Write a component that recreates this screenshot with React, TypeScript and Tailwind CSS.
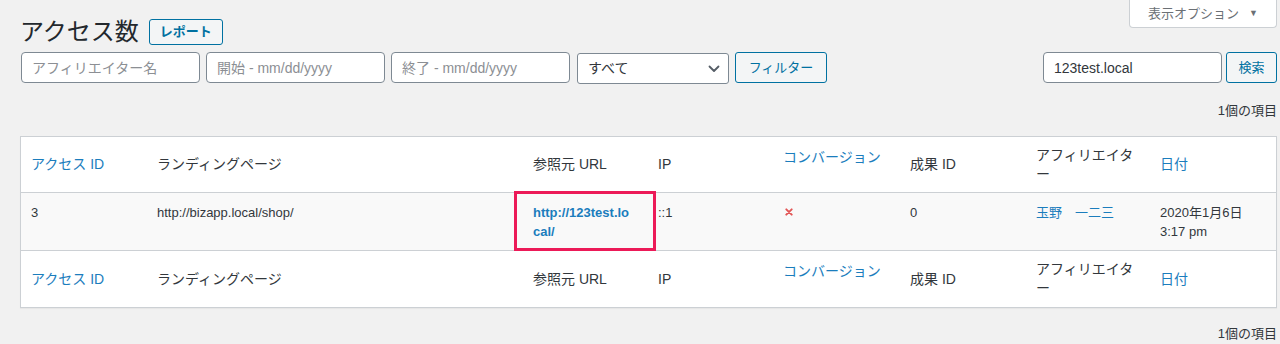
import React from "react";

const FONT = { fontFamily: '"Liberation Sans", "Noto Sans CJK JP", sans-serif' };

function Chevron() {
  return (
    <svg width="12" height="8" viewBox="0 0 12 8" className="text-[#555d66]">
      <path d="M1.5 1.5 L6 6 L10.5 1.5" fill="none" stroke="currentColor" strokeWidth="1.8" strokeLinecap="round" strokeLinejoin="round" />
    </svg>
  );
}

function RedX() {
  return (
    <svg width="8" height="8" viewBox="0 0 8 8">
      <path d="M1.3 1.3 L6.7 6.7 M6.7 1.3 L1.3 6.7" stroke="#e25555" strokeWidth="1.9" strokeLinecap="round" />
    </svg>
  );
}

const cols = ["w-[126px]", "w-[376px]", "w-[125px]", "w-[125px]", "w-[127px]", "w-[126px]", "w-[124px]", "w-[126px]"];

function HeadRow({ border }: { border: "b" | "none" }) {
  return (
    <div className={`flex h-[56px] text-[14px] text-[#32373c] ${border === "b" ? "border-b border-[#ccd0d4]" : ""}`}>
      <div className={`${cols[0]} flex items-center pl-[10px] text-[#1b7dbd]`}>アクセス ID</div>
      <div className={`${cols[1]} flex items-center pl-[10px]`}>ランディングページ</div>
      <div className={`${cols[2]} flex items-center pl-[10px]`}>参照元 URL</div>
      <div className={`${cols[3]} flex items-center pl-[10px]`}>IP</div>
      <div className={`${cols[4]} flex items-start pl-[10px] pt-[10px] text-[#1b7dbd]`}>コンバージョン</div>
      <div className={`${cols[5]} flex items-center pl-[10px]`}>成果 ID</div>
      <div className={`${cols[6]} flex items-center pl-[10px] leading-[19px]`}>
        <span>
          アフィリエイタ
          <br />ー
        </span>
      </div>
      <div className={`${cols[7]} flex items-center pl-[10px] text-[#1b7dbd]`}>日付</div>
    </div>
  );
}

export default function App() {
  return (
    <div className="min-h-[344px] w-full bg-[#f1f1f1] pl-[20px] pr-[3px]" style={FONT}>
      <div className="flex h-[52px] items-start justify-between">
        <div className="mt-[19px] flex items-center gap-[10px]">
          <h1 className="text-[24px] leading-[26px] text-[#23282d]">アクセス数</h1>
          <button className="h-[26px] rounded-[3px] border border-[#0071a1] bg-[#f3f5f6] px-[10px] text-[13px] font-semibold text-[#0071a1]">
            レポート
          </button>
        </div>
        <div className="flex h-[28px] w-[148px] items-center justify-center gap-[10px] rounded-b-[4px] border border-t-0 border-[#ccd0d4] bg-white text-[13px] text-[#6b7075]">
          <span>表示オプション</span>
          <span className="text-[9px]">▼</span>
        </div>
      </div>

      <div className="flex h-[31px] items-center justify-between">
        <div className="ml-px flex h-full items-center">
          <input
            className="h-[31px] w-[179px] rounded-[4px] border border-[#7e8993] bg-white px-[10px] text-[14px] text-[#32373c] placeholder:text-[#8c8f94] outline-none"
            placeholder="アフィリエイター名"
          />
          <input
            className="ml-[6px] h-[31px] w-[179px] rounded-[4px] border border-[#7e8993] bg-white px-[10px] text-[14px] text-[#32373c] placeholder:text-[#8c8f94] outline-none"
            placeholder="開始 - mm/dd/yyyy"
          />
          <input
            className="ml-[6px] h-[31px] w-[179px] rounded-[4px] border border-[#7e8993] bg-white px-[10px] text-[14px] text-[#32373c] placeholder:text-[#8c8f94] outline-none"
            placeholder="終了 - mm/dd/yyyy"
          />
          <div className="ml-[7px] mt-[2px] flex h-[31px] w-[152px] items-center justify-between rounded-[3px] border border-[#7e8993] bg-white pl-[10px] pr-[8px] text-[14px] text-[#32373c]">
            <span>すべて</span>
            <Chevron />
          </div>
          <button className="ml-[6px] h-[31px] w-[92px] rounded-[3px] border border-[#0071a1] bg-[#f3f5f6] text-[13px] text-[#0071a1]">
            フィルター
          </button>
        </div>
        <div className="flex h-full items-center">
          <input
            className="h-[31px] w-[179px] rounded-[4px] border border-[#7e8993] bg-white px-[10px] text-[14px] text-[#32373c] outline-none"
            defaultValue="123test.local"
          />
          <button className="ml-[4px] h-[31px] w-[51px] rounded-[3px] border border-[#0071a1] bg-[#f3f5f6] text-[13px] text-[#0071a1]">
            検索
          </button>
        </div>
      </div>

      <div className="mt-[19px] h-[18px] text-right text-[13px] leading-[18px] text-[#32373c]">1個の項目</div>

      <div className="mt-[16px] border border-[#ccd0d4] bg-white shadow-[0_1px_1px_rgba(0,0,0,0.04)]">
        <HeadRow border="b" />
        <div className="flex h-[58px] border-b border-[#ccd0d4] bg-[#f9f9f9] text-[13px] leading-[19px] text-[#32373c]">
          <div className={`${cols[0]} pl-[10px] pt-[10px]`}>3</div>
          <div className={`${cols[1]} pl-[10px] pt-[10px]`}>http://bizapp.local/shop/</div>
          <div className={`${cols[2]} relative pl-[10px] pt-[10px]`}>
            <span className="whitespace-nowrap font-semibold text-[#1b7dbd]">
              http://123test.lo
              <br />
              cal/
            </span>
            <div className="absolute -left-[9px] -right-[8px] -top-[2px] -bottom-[1px] border-[3px] border-[#ec1a58]" />
          </div>
          <div className={`${cols[3]} pl-[10px] pt-[10px]`}>::1</div>
          <div className={`${cols[4]} pl-[12px] pt-[15px]`}>
            <RedX />
          </div>
          <div className={`${cols[5]} pl-[10px] pt-[10px]`}>0</div>
          <div className={`${cols[6]} pl-[10px] pt-[10px] text-[#1b7dbd]`}>玉野　一二三</div>
          <div className={`${cols[7]} pl-[10px] pr-[10px] pt-[10px]`}>2020年1月6日 3:17 pm</div>
        </div>
        <HeadRow border="none" />
      </div>

      <div className="mt-[17px] h-[18px] text-right text-[13px] leading-[18px] text-[#32373c]">1個の項目</div>
    </div>
  );
}
